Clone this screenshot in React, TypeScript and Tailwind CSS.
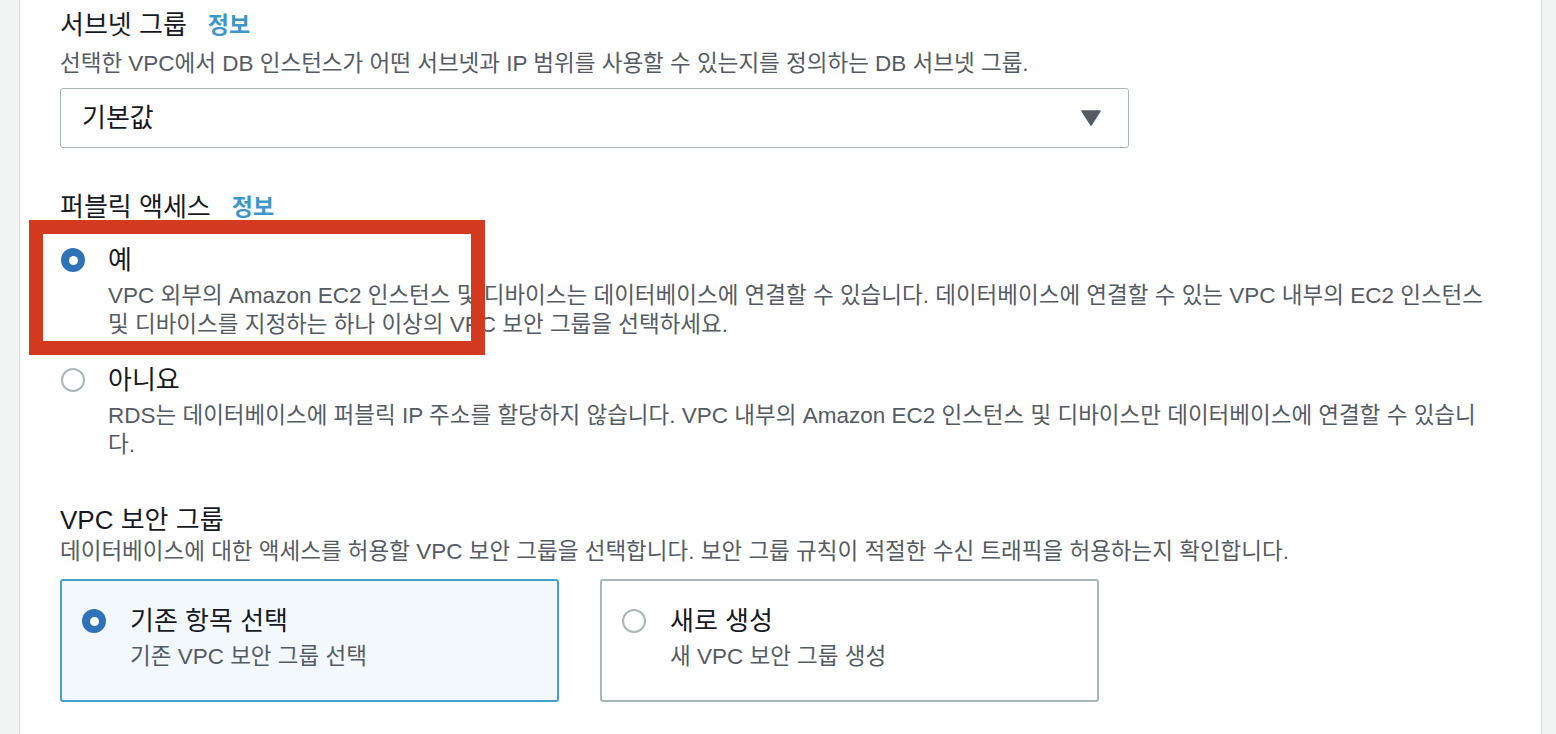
import React from 'react';

const font = { fontFamily: '"Liberation Sans", "Noto Sans CJK KR", sans-serif' };

const Radio: React.FC<{ checked?: boolean }> = ({ checked }) =>
  checked ? (
    <span className="mt-[5px] flex h-[24px] w-[24px] shrink-0 items-center justify-center rounded-full bg-[#2f72b8]">
      <span className="h-[9px] w-[9px] rounded-full bg-white" />
    </span>
  ) : (
    <span className="mt-[5px] h-[24px] w-[24px] shrink-0 rounded-full border-2 border-[#aab7b8] bg-white" />
  );

const Label: React.FC<{ title: string; info?: boolean }> = ({ title, info }) => (
  <h3 className="flex items-center text-[26px] leading-[34px] text-[#16191f]">
    {title}
    {info && <span className="ml-[21px] text-[23px] font-bold text-[#3c96c9]">정보</span>}
  </h3>
);

const Option: React.FC<{ checked?: boolean; label: string; desc: string; className?: string }> = ({
  checked,
  label,
  desc,
  className,
}) => (
  <div className={`flex gap-[23px] pl-[1px] ${className ?? ''}`}>
    <Radio checked={checked} />
    <div className="flex-1">
      <div className="text-[26px] leading-[34px] text-[#16191f]">{label}</div>
      <p className="mt-[4px] text-[22.5px] leading-[29px] text-[#545b64]">{desc}</p>
    </div>
  </div>
);

const Tile: React.FC<{ checked?: boolean; label: string; desc: string }> = ({ checked, label, desc }) => (
  <div
    className={`flex h-[123px] w-[499px] gap-[24px] rounded-[3px] border-2 pl-[20px] pt-[23px] ${
      checked ? 'border-[#44a3cc] bg-[#f2f8fc]' : 'border-[#aab7b8] bg-white'
    }`}
  >
    <Radio checked={checked} />
    <div>
      <div className="text-[26px] leading-[34px] text-[#16191f]">{label}</div>
      <div className="mt-[4px] text-[22.5px] leading-[29px] text-[#545b64]">{desc}</div>
    </div>
  </div>
);

export default function App() {
  return (
    <div className="flex h-[734px] w-[1556px] overflow-hidden bg-[#f2f3f3]" style={font}>
      <main className="relative ml-[19px] w-[1523px] border-x border-[#d5dbdb] bg-white pl-[40px] pr-[51px] pt-[8px]">
        <Label title="서브넷 그룹" info />
        <p className="mt-[8px] text-[22.5px] leading-[28px] text-[#545b64]">
          선택한 VPC에서 DB 인스턴스가 어떤 서브넷과 IP 범위를 사용할 수 있는지를 정의하는 DB 서브넷 그룹.
        </p>
        <div className="mt-[10px] flex h-[60px] w-[1069px] items-center justify-between rounded-[3px] border border-[#aab7b8] pl-[21px] pr-[27px]">
          <span className="text-[26px] text-[#16191f]">기본값</span>
          <svg width="20" height="16" viewBox="0 0 20 16">
            <path d="M1 1 H19 L10 15 Z" fill="#545b64" stroke="#545b64" strokeWidth="1.5" strokeLinejoin="round" />
          </svg>
        </div>

        <div className="mt-[42px]">
          <Label title="퍼블릭 액세스" info />
        </div>
        <Option
          className="mt-[19px]"
          checked
          label="예"
          desc="VPC 외부의 Amazon EC2 인스턴스 및 디바이스는 데이터베이스에 연결할 수 있습니다. 데이터베이스에 연결할 수 있는 VPC 내부의 EC2 인스턴스 및 디바이스를 지정하는 하나 이상의 VPC 보안 그룹을 선택하세요."
        />
        <Option
          className="mt-[24px]"
          label="아니요"
          desc="RDS는 데이터베이스에 퍼블릭 IP 주소를 할당하지 않습니다. VPC 내부의 Amazon EC2 인스턴스 및 디바이스만 데이터베이스에 연결할 수 있습니다."
        />

        <div className="mt-[44px]">
          <Label title="VPC 보안 그룹" />
        </div>
        <p className="mt-[1px] text-[22.5px] leading-[28px] text-[#545b64]">
          데이터베이스에 대한 액세스를 허용할 VPC 보안 그룹을 선택합니다. 보안 그룹 규칙이 적절한 수신 트래픽을 허용하는지 확인합니다.
        </p>
        <div className="mt-[13px] flex gap-[41px]">
          <Tile checked label="기존 항목 선택" desc="기존 VPC 보안 그룹 선택" />
          <Tile label="새로 생성" desc="새 VPC 보안 그룹 생성" />
        </div>

        {/* highlight drawn over the "예" option */}
        <div className="pointer-events-none absolute left-[9px] top-[220px] h-[135px] w-[456px] border-[14px] border-[#d33a20]" />
      </main>
    </div>
  );
}
